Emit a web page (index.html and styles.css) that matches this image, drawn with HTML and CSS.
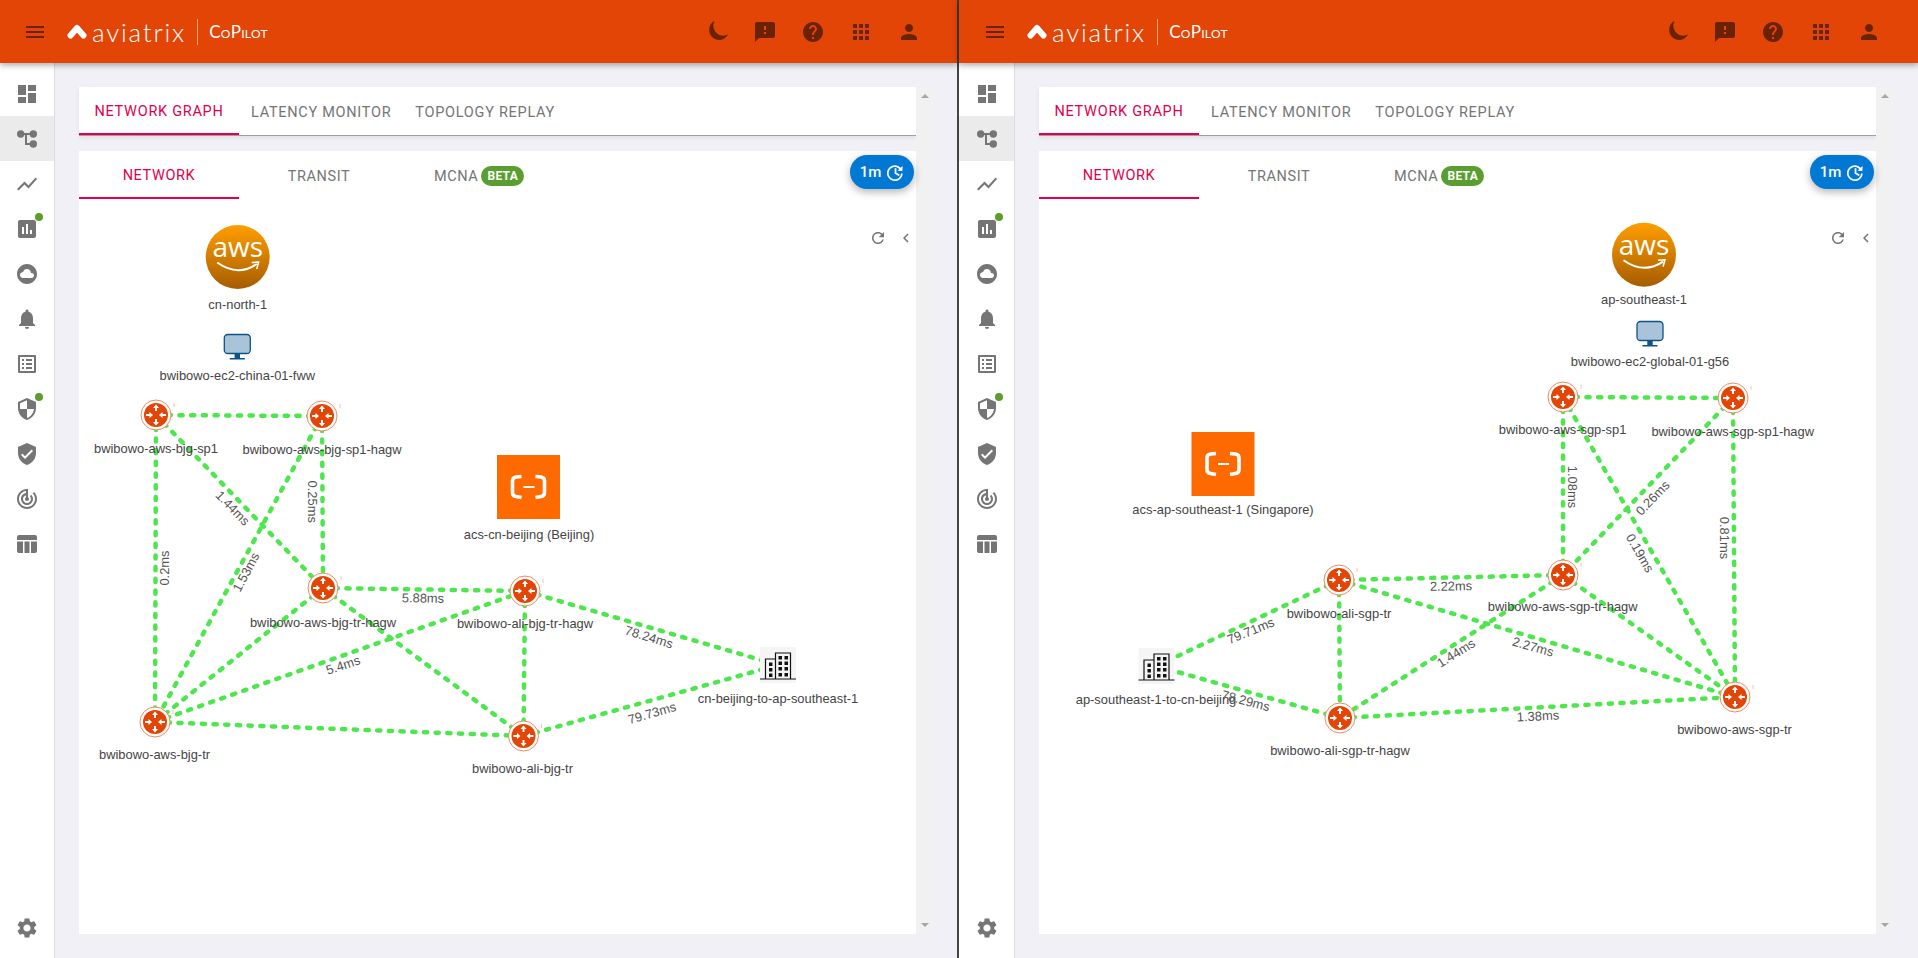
FILE: index.html
```html
<!DOCTYPE html>
<html lang="en">
<head>
    <meta charset="UTF-8" />
    <title>Aviatrix CoPilot</title>
    <link rel="stylesheet" href="styles.css">
</head>
<body>
    <svg class="defs" xmlns="http://www.w3.org/2000/svg">
        <defs>
            <linearGradient id="awsGrad" x1="0" y1="0" x2="0" y2="1">
                <stop offset="0" stop-color="#ff9e00" />
                <stop offset="1" stop-color="#a65d00" />
            </linearGradient>
            <symbol id="i-menu" viewBox="0 0 24 24"><path d="M3 18h18v-2H3v2zm0-5h18v-2H3v2zm0-7v2h18V6H3z" /></symbol>
            <symbol id="i-moon" viewBox="0 0 24 24"><path transform="rotate(135 12 12)" d="M9 2c-1.05 0-2.05.16-3 .46 4.06 1.27 7 5.06 7 9.54 0 4.48-2.94 8.27-7 9.54.95.3 1.95.46 3 .46 5.52 0 10-4.48 10-10S14.52 2 9 2z" /></symbol>
            <symbol id="i-feedback" viewBox="0 0 24 24"><path d="M20 2H4c-1.1 0-1.99.9-1.99 2L2 22l4-4h14c1.1 0 2-.9 2-2V4c0-1.1-.9-2-2-2zm-7 12h-2v-2h2v2zm0-4h-2V6h2v4z" /></symbol>
            <symbol id="i-help" viewBox="0 0 24 24"><path d="M12 2C6.48 2 2 6.48 2 12s4.48 10 10 10 10-4.48 10-10S17.52 2 12 2zm1 17h-2v-2h2v2zm2.07-7.75l-.9.92C13.45 12.9 13 13.5 13 15h-2v-.5c0-1.1.45-2.1 1.17-2.83l1.24-1.26c.37-.36.59-.86.59-1.41 0-1.1-.9-2-2-2s-2 .9-2 2H8c0-2.21 1.79-4 4-4s4 1.79 4 4c0 .88-.36 1.68-.93 2.25z" /></symbol>
            <symbol id="i-apps" viewBox="0 0 24 24"><path d="M4 8h4V4H4v4zm6 12h4v-4h-4v4zm-6 0h4v-4H4v4zm0-6h4v-4H4v4zm6 0h4v-4h-4v4zm6-10v4h4V4h-4zm-6 4h4V4h-4v4zm6 6h4v-4h-4v4zm0 6h4v-4h-4v4z" /></symbol>
            <symbol id="i-person" viewBox="0 0 24 24"><path d="M12 12c2.21 0 4-1.79 4-4s-1.79-4-4-4-4 1.79-4 4 1.79 4 4 4zm0 2c-2.67 0-8 1.34-8 4v2h16v-2c0-2.66-5.33-4-8-4z" /></symbol>
            <symbol id="i-dashboard" viewBox="0 0 24 24"><path d="M3 13h8V3H3v10zm0 8h8v-6H3v6zm10 0h8V11h-8v10zm0-18v6h8V3h-8z" /></symbol>
            <symbol id="i-topology" viewBox="0 0 24 24"><circle cx="5.7" cy="7" r="3.7" /><circle cx="18.3" cy="7" r="3.7" /><circle cx="18.3" cy="17" r="3.7" /><path d="M5 6h14v2h-7v8h7v2h-9V8H5z" /></symbol>
            <symbol id="i-chart" viewBox="0 0 24 24"><path d="M3.5 18.49l6-6.01 4 4L22 6.92l-1.41-1.41-7.09 7.97-4-4L2 16.99z" /></symbol>
            <symbol id="i-assess" viewBox="0 0 24 24"><path d="M19 3H5c-1.1 0-2 .9-2 2v14c0 1.1.9 2 2 2h14c1.1 0 2-.9 2-2V5c0-1.1-.9-2-2-2zM9 17H7v-7h2v7zm4 0h-2V7h2v10zm4 0h-2v-4h2v4z" /></symbol>
            <symbol id="i-cloud" viewBox="0 0 24 24"><path d="M12 2C6.47 2 2 6.47 2 12s4.47 10 10 10 10-4.47 10-10S17.53 2 12 2zm4.5 14H8c-1.66 0-3-1.34-3-3s1.34-3 3-3l.14.01C8.58 8.28 10.13 7 12 7c2.21 0 4 1.79 4 4h.5c1.38 0 2.5 1.12 2.5 2.5S17.88 16 16.5 16z" /></symbol>
            <symbol id="i-bell" viewBox="0 0 24 24"><path d="M12 22c1.1 0 2-.9 2-2h-4c0 1.1.89 2 2 2zm6-6v-5c0-3.07-1.64-5.64-4.5-6.32V4c0-.83-.67-1.5-1.5-1.5s-1.5.67-1.5 1.5v.68C7.63 5.36 6 7.92 6 11v5l-2 2v1h16v-1l-2-2z" /></symbol>
            <symbol id="i-list" viewBox="0 0 24 24"><path d="M19 5v14H5V5h14m1.1-2H3.9c-.5 0-.9.4-.9.9v16.2c0 .4.4.9.9.9h16.2c.4 0 .9-.5.9-.9V3.9c0-.5-.5-.9-.9-.9zM11 7h6v2h-6V7zm0 4h6v2h-6v-2zm0 4h6v2h-6zM7 7h2v2H7zm0 4h2v2H7zm0 4h2v2H7z" /></symbol>
            <symbol id="i-security" viewBox="0 0 24 24"><path d="M12 1L3 5v6c0 5.55 3.84 10.74 9 12 5.16-1.26 9-6.45 9-12V5l-9-4zm0 10.99h7c-.53 4.12-3.28 7.79-7 8.94V12H5V6.3l7-3.11v8.8z" /></symbol>
            <symbol id="i-verified" viewBox="0 0 24 24"><path d="M12 1L3 5v6c0 5.55 3.84 10.74 9 12 5.16-1.26 9-6.45 9-12V5l-9-4zm-2 16l-4-4 1.41-1.41L10 14.17l6.59-6.59L18 9l-8 8z" /></symbol>
            <symbol id="i-radar" viewBox="0 0 24 24"><path d="M19.07 4.93l-1.41 1.41C19.1 7.79 20 9.79 20 12c0 4.42-3.58 8-8 8s-8-3.58-8-8c0-4.08 3.05-7.44 7-7.93v2.02C8.16 6.57 6 9.03 6 12c0 3.31 2.69 6 6 6s6-2.69 6-6c0-1.66-.67-3.16-1.76-4.24l-1.41 1.41C15.55 9.9 16 10.9 16 12c0 2.21-1.79 4-4 4s-4-1.79-4-4c0-1.86 1.28-3.41 3-3.86v2.14c-.6.35-1 .98-1 1.72 0 1.1.9 2 2 2s2-.9 2-2c0-.74-.4-1.38-1-1.72V2h-1C6.48 2 2 6.48 2 12s4.48 10 10 10 10-4.48 10-10c0-2.76-1.12-5.26-2.93-7.07z" /></symbol>
            <symbol id="i-table" viewBox="0 0 24 24"><path d="M4 3h16a2 2 0 0 1 2 2v3H2V5a2 2 0 0 1 2-2zM2 9.5h6V21H4a2 2 0 0 1-2-2zM9.5 9.5h5V21h-5zM16 9.5h6V19a2 2 0 0 1-2 2h-4z" /></symbol>
            <symbol id="i-settings" viewBox="0 0 24 24"><path d="M19.14 12.94c.04-.3.06-.61.06-.94 0-.32-.02-.64-.07-.94l2.03-1.58c.18-.14.23-.41.12-.61l-1.92-3.32c-.12-.22-.37-.29-.59-.22l-2.39.96c-.5-.38-1.03-.7-1.62-.94l-.36-2.54c-.04-.24-.24-.41-.48-.41h-3.84c-.24 0-.43.17-.47.41l-.36 2.54c-.59.24-1.13.57-1.62.94l-2.39-.96c-.22-.08-.47 0-.59.22L2.74 8.87c-.12.21-.08.47.12.61l2.03 1.58c-.05.3-.09.63-.09.94s.02.64.07.94l-2.03 1.58c-.18.14-.23.41-.12.61l1.92 3.32c.12.22.37.29.59.22l2.39-.96c.5.38 1.03.7 1.62.94l.36 2.54c.05.24.24.41.48.41h3.84c.24 0 .44-.17.47-.41l.36-2.54c.59-.24 1.13-.56 1.62-.94l2.39.96c.22.08.47 0 .59-.22l1.92-3.32c.12-.22.07-.47-.12-.61l-2.01-1.58zM12 15.6c-1.98 0-3.6-1.62-3.6-3.6s1.62-3.6 3.6-3.6 3.6 1.62 3.6 3.6-1.62 3.6-3.6 3.6z" /></symbol>
            <symbol id="i-timer" viewBox="0 0 24 24"><path transform="rotate(-42 12 12) translate(24 0) scale(-1 1)" d="M13 3c-4.97 0-9 4.03-9 9H1l3.89 3.89.07.14L9 12H6c0-3.87 3.13-7 7-7s7 3.13 7 7-3.13 7-7 7c-1.93 0-3.68-.79-4.94-2.06l-1.42 1.42C8.27 19.99 10.51 21 13 21c4.97 0 9-4.03 9-9s-4.03-9-9-9z" /><path d="M11 7h2v5.2l3.8 2.2-1 1.7L11 13.3z" /></symbol>
            <symbol id="i-refresh" viewBox="0 0 24 24"><path d="M17.65 6.35C16.2 4.9 14.21 4 12 4c-4.42 0-7.99 3.58-7.99 8s3.57 8 7.99 8c3.73 0 6.84-2.55 7.73-6h-2.08c-.82 2.33-3.04 4-5.65 4-3.31 0-6-2.69-6-6s2.69-6 6-6c1.66 0 3.14.69 4.22 1.78L13 11h7V4l-2.35 2.35z" /></symbol>
            <symbol id="i-chevron" viewBox="0 0 24 24"><path d="M15.41 7.41L14 6l-6 6 6 6 1.41-1.41L10.83 12z" /></symbol>

            <!-- graph nodes, origin is the centre of the icon -->
            <g id="gw">
                <circle r="15" fill="#fff" stroke="#ee8a62" stroke-width="1" />
                <circle r="12" fill="#e24506" />
                <path fill="#fff" d="M0-10.5L3-7H1v3H-1V-7H-3zM0 10.5L3 7H1V4H-1V7H-3zM-3 0L-6.5-3v2H-10V1h3.5V3zM3 0L6.5-3v2H10V1H6.5V3z" />
                <path d="M18-12v4" stroke="#f6c4ae" stroke-width="1" />
            </g>
            <g id="aws">
                <circle r="32" fill="url(#awsGrad)" />
                <text class="aws-text" y="0">aws</text>
                <path d="M-20.5 5.5Q0 20 19 7" fill="none" stroke="#fff" stroke-width="2" />
                <path d="M14 5.5L21 5 19 12" fill="none" stroke="#fff" stroke-width="1.5" />
            </g>
            <g id="vm">
                <rect x="-13" y="-12.5" width="26" height="19" rx="3.5" fill="#a9c3d9" stroke="#0f5288" stroke-width="1.3" />
                <rect x="-2.7" y="6.5" width="5.4" height="5" fill="#0f5288" />
                <rect x="-7.5" y="11" width="15" height="1.5" fill="#0f5288" />
            </g>
            <g id="ali">
                <rect x="-31.5" y="-32" width="63" height="64" fill="#ff6a00" />
                <path d="M-7-10.5L-12.5-10Q-16-9.5-16-6V5.5Q-16 9-12.5 9.5L-7 10.5M7-10.5L12.5-10Q16-9.5 16-6V5.5Q16 9 12.5 9.5L7 10.5" fill="none" stroke="#fff" stroke-width="3.6" />
                <path d="M-5 0H6" stroke="#fff" stroke-width="2" />
            </g>
            <g id="site">
                <rect x="-18" y="-18" width="36" height="36" fill="#f5f5f5" />
                <path d="M-18 14H18M-2.5 14V-12H12.5V14M-2.5 14V-6H-12.5V14" fill="none" stroke="#111" stroke-width="1.2" />
                <path fill="#111" d="M-9-2.5h3.4V1H-9zM-9 3h3.4v3.5H-9zM-9 8.5h3.4V12H-9zM.5-9H4v3.4H.5zM6.5-9H10v3.4H6.5zM.5-3.5H4V0H.5zM6.5-3.5H10V0H6.5zM.5 2H4v3.4H.5zM6.5 2H10v3.4H6.5zM.5 8H4v3.4H.5zM6.5 8H10v3.4H6.5z" />
            </g>
        </defs>
    </svg>

    <!-- left window: Beijing -->
    <section class="pane">
        <header class="topbar">
            <svg class="icon menu-btn"><use href="#i-menu" /></svg>
            <div class="logo">
                <svg class="logo-mark" viewBox="0 0 20 15"><path d="M3.5 11.5L10 4l6.5 7.5" /></svg>
                <span class="logo-name">aviatrix</span>
                <span class="logo-sub">CoPilot</span>
            </div>
            <div class="top-actions">
                <svg class="icon"><use href="#i-moon" /></svg>
                <svg class="icon"><use href="#i-feedback" /></svg>
                <svg class="icon"><use href="#i-help" /></svg>
                <svg class="icon"><use href="#i-apps" /></svg>
                <svg class="icon"><use href="#i-person" /></svg>
            </div>
        </header>
        <div class="pane-body">
            <nav class="sidebar">
                <a class="side-item"><svg class="icon"><use href="#i-dashboard" /></svg></a>
                <a class="side-item active"><svg class="icon"><use href="#i-topology" /></svg></a>
                <a class="side-item"><svg class="icon"><use href="#i-chart" /></svg></a>
                <a class="side-item"><svg class="icon"><use href="#i-assess" /></svg><span class="dot"></span></a>
                <a class="side-item"><svg class="icon"><use href="#i-cloud" /></svg></a>
                <a class="side-item"><svg class="icon"><use href="#i-bell" /></svg></a>
                <a class="side-item"><svg class="icon"><use href="#i-list" /></svg></a>
                <a class="side-item"><svg class="icon"><use href="#i-security" /></svg><span class="dot"></span></a>
                <a class="side-item"><svg class="icon"><use href="#i-verified" /></svg></a>
                <a class="side-item"><svg class="icon"><use href="#i-radar" /></svg></a>
                <a class="side-item"><svg class="icon"><use href="#i-table" /></svg></a>
                <a class="side-item side-bottom"><svg class="icon"><use href="#i-settings" /></svg></a>
            </nav>
            <main class="main">
                <div class="content">
                    <div class="tabs tabs-top">
                        <a class="tab active">Network Graph</a>
                        <a class="tab">Latency Monitor</a>
                        <a class="tab">Topology Replay</a>
                    </div>
                    <div class="card">
                        <div class="tabs">
                            <a class="tab tab-wide active">Network</a>
                            <a class="tab tab-wide">Transit</a>
                            <a class="tab tab-wide">MCNA <span class="beta">BETA</span></a>
                        </div>
                        <button class="timer-btn">1m <svg class="icon"><use href="#i-timer" /></svg></button>
                        <div class="graph-tools">
                            <svg class="icon"><use href="#i-refresh" /></svg>
                            <svg class="icon"><use href="#i-chevron" /></svg>
                        </div>
                        <svg class="graph" viewBox="79 199 837 735">
                            <line class="edge" x1="156" y1="415" x2="322" y2="416" />
                            <line class="edge" x1="156" y1="415" x2="155" y2="722" />
                            <line class="edge" x1="156" y1="415" x2="323" y2="588" />
                            <line class="edge" x1="322" y1="416" x2="323" y2="588" />
                            <line class="edge" x1="322" y1="416" x2="155" y2="722" />
                            <line class="edge" x1="323" y1="588" x2="155" y2="722" />
                            <line class="edge" x1="323" y1="588" x2="525" y2="591" />
                            <line class="edge" x1="323" y1="588" x2="523.5" y2="736" />
                            <line class="edge" x1="155" y1="722" x2="525" y2="591" />
                            <line class="edge" x1="155" y1="722" x2="523.5" y2="736" />
                            <line class="edge" x1="525" y1="591" x2="523.5" y2="736" />
                            <line class="edge" x1="525" y1="591" x2="778" y2="665" />
                            <line class="edge" x1="523.5" y1="736" x2="778" y2="665" />

                            <use href="#aws" x="237.7" y="257" />
                            <use href="#vm" x="237.3" y="347" />
                            <use href="#ali" x="528.5" y="487" />
                            <use href="#site" x="778" y="665" />
                            <use href="#gw" x="156" y="415" />
                            <use href="#gw" x="322" y="416" />
                            <use href="#gw" x="323" y="588" />
                            <use href="#gw" x="155" y="722" />
                            <use href="#gw" x="525" y="591" />
                            <use href="#gw" x="523.5" y="736" />

                            <text class="lbl" x="237.7" y="304">cn-north-1</text>
                            <text class="lbl" x="237.3" y="375">bwibowo-ec2-china-01-fww</text>
                            <text class="lbl" x="529" y="534">acs-cn-beijing (Beijing)</text>
                            <text class="lbl" x="156" y="448">bwibowo-aws-bjg-sp1</text>
                            <text class="lbl" x="322" y="449">bwibowo-aws-bjg-sp1-hagw</text>
                            <text class="lbl" x="323" y="622">bwibowo-aws-bjg-tr-hagw</text>
                            <text class="lbl" x="154.5" y="754">bwibowo-aws-bjg-tr</text>
                            <text class="lbl" x="525" y="623">bwibowo-ali-bjg-tr-hagw</text>
                            <text class="lbl" x="522.5" y="768">bwibowo-ali-bjg-tr</text>
                            <text class="lbl" x="778" y="698">cn-beijing-to-ap-southeast-1</text>

                            <text class="ms" transform="translate(164 568) rotate(-90)">0.2ms</text>
                            <text class="ms" transform="translate(312 501.7) rotate(90)">0.25ms</text>
                            <text class="ms" transform="translate(232.7 508) rotate(46)">1.44ms</text>
                            <text class="ms" transform="translate(246 572) rotate(-62)">1.53ms</text>
                            <text class="ms" transform="translate(423 598) rotate(1)">5.88ms</text>
                            <text class="ms" transform="translate(343 665) rotate(-18)">5.4ms</text>
                            <text class="ms" transform="translate(649 637) rotate(17)">78.24ms</text>
                            <text class="ms" transform="translate(652 713) rotate(-16)">79.73ms</text>
                        </svg>
                    </div>
                </div>
                <div class="scroll-track">
                    <span class="arrow-up"></span>
                    <span class="arrow-down"></span>
                </div>
            </main>
        </div>
    </section>

    <div class="divider"></div>

    <!-- right window: Singapore -->
    <section class="pane pane-right">
        <header class="topbar">
            <svg class="icon menu-btn"><use href="#i-menu" /></svg>
            <div class="logo">
                <svg class="logo-mark" viewBox="0 0 20 15"><path d="M3.5 11.5L10 4l6.5 7.5" /></svg>
                <span class="logo-name">aviatrix</span>
                <span class="logo-sub">CoPilot</span>
            </div>
            <div class="top-actions">
                <svg class="icon"><use href="#i-moon" /></svg>
                <svg class="icon"><use href="#i-feedback" /></svg>
                <svg class="icon"><use href="#i-help" /></svg>
                <svg class="icon"><use href="#i-apps" /></svg>
                <svg class="icon"><use href="#i-person" /></svg>
            </div>
        </header>
        <div class="pane-body">
            <nav class="sidebar">
                <a class="side-item"><svg class="icon"><use href="#i-dashboard" /></svg></a>
                <a class="side-item active"><svg class="icon"><use href="#i-topology" /></svg></a>
                <a class="side-item"><svg class="icon"><use href="#i-chart" /></svg></a>
                <a class="side-item"><svg class="icon"><use href="#i-assess" /></svg><span class="dot"></span></a>
                <a class="side-item"><svg class="icon"><use href="#i-cloud" /></svg></a>
                <a class="side-item"><svg class="icon"><use href="#i-bell" /></svg></a>
                <a class="side-item"><svg class="icon"><use href="#i-list" /></svg></a>
                <a class="side-item"><svg class="icon"><use href="#i-security" /></svg><span class="dot"></span></a>
                <a class="side-item"><svg class="icon"><use href="#i-verified" /></svg></a>
                <a class="side-item"><svg class="icon"><use href="#i-radar" /></svg></a>
                <a class="side-item"><svg class="icon"><use href="#i-table" /></svg></a>
                <a class="side-item side-bottom"><svg class="icon"><use href="#i-settings" /></svg></a>
            </nav>
            <main class="main">
                <div class="content">
                    <div class="tabs tabs-top">
                        <a class="tab active">Network Graph</a>
                        <a class="tab">Latency Monitor</a>
                        <a class="tab">Topology Replay</a>
                    </div>
                    <div class="card">
                        <div class="tabs">
                            <a class="tab tab-wide active">Network</a>
                            <a class="tab tab-wide">Transit</a>
                            <a class="tab tab-wide">MCNA <span class="beta">BETA</span></a>
                        </div>
                        <button class="timer-btn">1m <svg class="icon"><use href="#i-timer" /></svg></button>
                        <div class="graph-tools">
                            <svg class="icon"><use href="#i-refresh" /></svg>
                            <svg class="icon"><use href="#i-chevron" /></svg>
                        </div>
                        <svg class="graph" viewBox="1039 199 837 735">
                            <line class="edge" x1="1563" y1="397" x2="1733" y2="398" />
                            <line class="edge" x1="1563" y1="397" x2="1563" y2="575" />
                            <line class="edge" x1="1563" y1="397" x2="1735" y2="697" />
                            <line class="edge" x1="1733" y1="398" x2="1563" y2="575" />
                            <line class="edge" x1="1733" y1="398" x2="1735" y2="697" />
                            <line class="edge" x1="1563" y1="575" x2="1339" y2="580" />
                            <line class="edge" x1="1563" y1="575" x2="1340" y2="718" />
                            <line class="edge" x1="1563" y1="575" x2="1735" y2="697" />
                            <line class="edge" x1="1339" y1="580" x2="1735" y2="697" />
                            <line class="edge" x1="1340" y1="718" x2="1735" y2="697" />
                            <line class="edge" x1="1339" y1="580" x2="1340" y2="718" />
                            <line class="edge" x1="1156.5" y1="666" x2="1339" y2="580" />
                            <line class="edge" x1="1156.5" y1="666" x2="1340" y2="718" />

                            <use href="#aws" x="1644" y="254.7" />
                            <use href="#vm" x="1650" y="334" />
                            <use href="#ali" x="1223" y="464" />
                            <use href="#site" x="1156.5" y="666" />
                            <use href="#gw" x="1563" y="397" />
                            <use href="#gw" x="1733" y="398" />
                            <use href="#gw" x="1563" y="575" />
                            <use href="#gw" x="1735" y="697" />
                            <use href="#gw" x="1339" y="580" />
                            <use href="#gw" x="1340" y="718" />

                            <text class="lbl" x="1644" y="299">ap-southeast-1</text>
                            <text class="lbl" x="1650" y="361">bwibowo-ec2-global-01-g56</text>
                            <text class="lbl" x="1223" y="509">acs-ap-southeast-1 (Singapore)</text>
                            <text class="lbl" x="1562.6" y="429">bwibowo-aws-sgp-sp1</text>
                            <text class="lbl" x="1732.7" y="431">bwibowo-aws-sgp-sp1-hagw</text>
                            <text class="lbl" x="1562.7" y="606">bwibowo-aws-sgp-tr-hagw</text>
                            <text class="lbl" x="1734.5" y="729">bwibowo-aws-sgp-tr</text>
                            <text class="lbl" x="1339" y="613">bwibowo-ali-sgp-tr</text>
                            <text class="lbl" x="1340" y="750">bwibowo-ali-sgp-tr-hagw</text>
                            <text class="lbl" x="1156" y="699">ap-southeast-1-to-cn-beijing</text>

                            <text class="ms" transform="translate(1250.7 630.7) rotate(-22)">79.71ms</text>
                            <text class="ms" transform="translate(1245.7 700.7) rotate(15)">78.29ms</text>
                            <text class="ms" transform="translate(1451 586) rotate(-1)">2.22ms</text>
                            <text class="ms" transform="translate(1456 653) rotate(-32)">1.44ms</text>
                            <text class="ms" transform="translate(1533 646.7) rotate(16)">2.27ms</text>
                            <text class="ms" transform="translate(1538 716) rotate(-3)">1.38ms</text>
                            <text class="ms" transform="translate(1640 553) rotate(60)">0.19ms</text>
                            <text class="ms" transform="translate(1724 538) rotate(90)">0.81ms</text>
                            <text class="ms" transform="translate(1572 487) rotate(90)">1.08ms</text>
                            <text class="ms" transform="translate(1652.6 498) rotate(-46)">0.26ms</text>
                        </svg>
                    </div>
                </div>
                <div class="scroll-track">
                    <span class="arrow-up"></span>
                    <span class="arrow-down"></span>
                </div>
            </main>
        </div>
    </section>
</body>
</html>
```

FILE: styles.css
```css
* { box-sizing: border-box; }
html, body { height: 100%; }
body { margin: 0; display: flex; overflow: hidden; background: #f0f0f6; font-family: Roboto, "Liberation Sans", sans-serif; }
.defs { display: block; width: 0; height: 0; flex: none; }
.icon { display: block; width: 24px; height: 24px; fill: currentColor; flex: none; }

.pane { --shift: 0px; width: 957px; height: 958px; display: flex; flex-direction: column; flex: none; }
.pane-right { --shift: 1px; width: 959px; }
.divider { width: 2px; flex: none; background: #444; }

/* top bar */
.topbar { position: relative; z-index: 2; height: 63px; flex: none; display: flex; align-items: center; padding: 0 calc(36px + var(--shift)) 0 calc(23px + var(--shift)); background: #e24506; color: #6b2202; box-shadow: 0 2px 6px rgba(0,0,0,.35); }
.logo { display: flex; align-items: center; margin-left: 20px; color: #fff; }
.logo-mark { width: 20px; height: 15px; fill: none; stroke: #fff; stroke-width: 6; stroke-linecap: round; stroke-linejoin: round; }
.logo-name { margin-left: 5px; font: 300 26px/1 Lato, sans-serif; letter-spacing: 1.8px; }
.logo-sub { margin-left: 11px; padding-left: 11px; height: 26px; border-left: 1px solid #f0a888; font: 400 17px/26px Lato, sans-serif; font-variant: small-caps; letter-spacing: .3px; }
.top-actions { margin-left: auto; display: flex; gap: 24px; }

.pane-body { flex: 1; display: flex; min-height: 0; }

/* left icons */
.sidebar { width: calc(55px + var(--shift)); flex: none; display: flex; flex-direction: column; padding: 8px 0; background: #fff; border-right: 1px solid #dcdcdc; color: #757575; }
.side-item { position: relative; height: 45px; flex: none; display: flex; align-items: center; justify-content: center; }
.side-item.active { background: #ebebeb; }
.side-bottom { margin-top: auto; }
.dot { position: absolute; top: 7px; left: calc(35px + var(--shift) / 2); width: 8px; height: 8px; border-radius: 50%; background: #5c9e2e; }

.main { flex: 1; min-width: 0; display: flex; padding: 24px calc(24px + var(--shift)) 24px 24px; }
.content { flex: 1; min-width: 0; display: flex; flex-direction: column; }
.scroll-track { width: 17px; flex: none; display: flex; flex-direction: column; justify-content: space-between; align-items: center; padding: 7px 0; background: #f1f1f1; }
.arrow-up { border: 4px solid transparent; border-top: 0; border-bottom: 4px solid #a8a8a8; }
.arrow-down { border: 4px solid transparent; border-bottom: 0; border-top: 4px solid #a8a8a8; }

/* tabs */
.tabs { display: flex; height: 48px; flex: none; background: #fff; }
.tabs-top { height: 49px; border-bottom: 1px solid #9e9e9e; box-shadow: 0 2px 4px rgba(0,0,0,.07); }
.tab { min-width: 0; height: 48px; padding: 2px 12px 0; display: flex; align-items: center; justify-content: center; color: #757575; font-size: 14.5px; letter-spacing: .72px; text-transform: uppercase; }
.tab.active { min-width: 160px; color: #e0004d; border-bottom: 2px solid #e0004d; }
.tab-wide { width: 160px; gap: 3px; letter-spacing: .62px; }
.beta { padding: 0 6px; height: 20px; line-height: 20px; border-radius: 10px; background: #5a9e2f; color: #fff; font-size: 12px; font-weight: 700; letter-spacing: .3px; }

/* graph card */
.card { position: relative; flex: 1; min-height: 0; margin-top: 15px; background: #fff; }
.graph { display: block; width: 837px; height: 735px; }
.timer-btn { position: absolute; top: 4px; right: 2px; width: 64px; height: 34px; padding: 0 0 0 2px; display: flex; align-items: center; justify-content: center; gap: 4px; border: 0; border-radius: 17px; background: #0078d4; color: #fff; font: 500 15px Roboto, sans-serif; box-shadow: 0 3px 8px rgba(0,0,0,.3); }
.timer-btn .icon { width: 21px; height: 21px; }
.graph-tools { position: absolute; top: 78px; right: 1px; display: flex; align-items: center; gap: 10px; color: #757575; }
.graph-tools .icon { width: 18px; height: 18px; }

.edge { stroke: #4de64d; stroke-width: 4.5; stroke-dasharray: 3.2 8.5; stroke-linecap: round; }
.lbl, .ms { font: 12.9px "Liberation Sans", Arial, sans-serif; text-anchor: middle; dominant-baseline: central; }
.lbl { fill: #444; }
.ms { fill: #555; }
.aws-text { font: 28px "Open Sans", sans-serif; fill: #fff; text-anchor: middle; }
```
